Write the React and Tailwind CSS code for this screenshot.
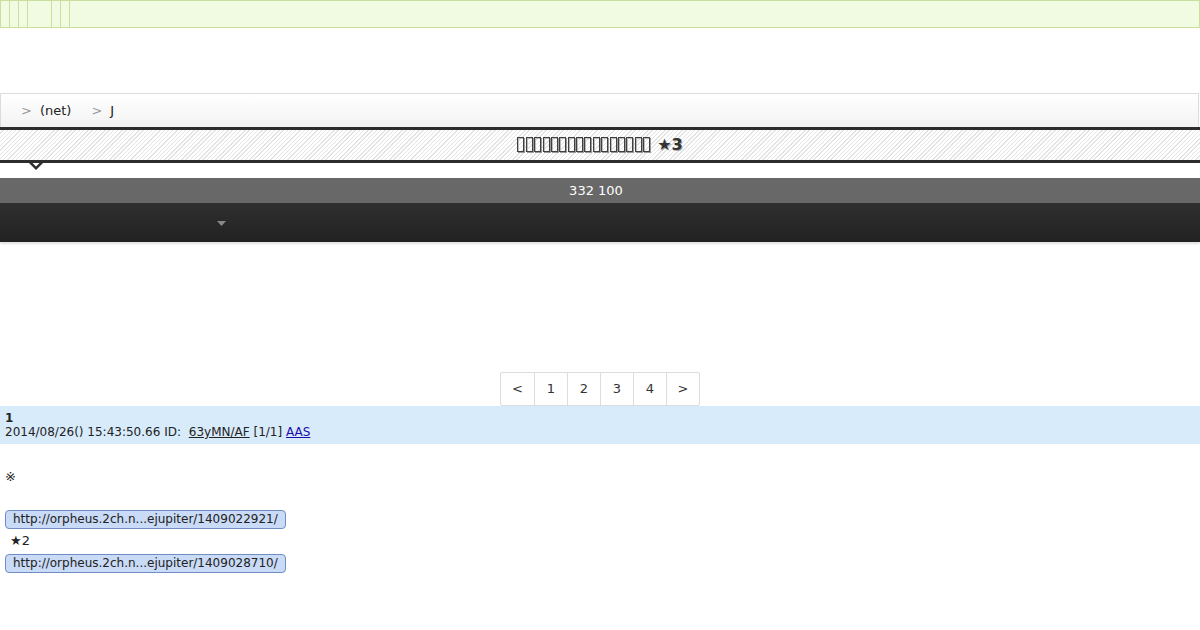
import React from "react";

const font = { fontFamily: '"DejaVu Sans", "Noto Sans CJK JP", sans-serif' };

function Tofu() {
  return (
    <span className="inline-block w-[7px] h-[15px] border-[1.5px] border-[#404040] shadow-[1px_1px_0_#999,inset_1px_1px_0_#bbb] mr-[1.4px] align-[-2px]" />
  );
}

export default function App() {
  const cols = [9, 9, 9, 24, 9, 9];
  return (
    <div className="w-[1200px] h-[630px] bg-white text-[13px] text-[#222] overflow-hidden" style={font}>
      {/* top ad bar */}
      <div className="h-[28px] border border-[#c9df9d] bg-[#f1fbe1] flex">
        {cols.map((w, i) => (
          <div key={i} className="h-full border-r border-[#c9df9d]" style={{ width: w }} />
        ))}
      </div>

      <div className="h-[65px]" />

      {/* breadcrumb */}
      <div className="h-[34px] border-t border-l border-r border-[#dcdcdc] bg-gradient-to-b from-white to-[#f3f3f3] flex items-center pl-[20px] mr-[1px]">
        <span className="text-[#999] mr-[8px]">&gt;</span>
        <span className="mr-[20px]">(net)</span>
        <span className="text-[#999] mr-[8px]">&gt;</span>
        <span>J</span>
      </div>

      {/* title */}
      <div className="relative">
        <div className="h-[36px] border-t-[3px] border-b-[3px] border-[#2d2d2d] bg-[repeating-linear-gradient(135deg,#ffffff_0px,#ffffff_2px,#e4e4e4_2px,#e4e4e4_3px)] flex items-center justify-center">
          <span className="font-bold text-[16px] text-[#333] [text-shadow:1px_1px_0_#aaa] whitespace-nowrap">
            {Array.from({ length: 16 }).map((_, i) => (
              <Tofu key={i} />
            ))}
            <span> ★3</span>
          </span>
        </div>
        <svg className="absolute left-[26px] top-[33px]" width="20" height="12" viewBox="0 0 20 12">
          <path d="M0 0 L10 10 L20 0 L16.5 0 L10 6.5 L3.5 0 Z" fill="#2d2d2d" />
        </svg>
      </div>

      <div className="h-[15px]" />

      {/* counter bar */}
      <div className="h-[25px] bg-[#686868] text-white flex items-center justify-center text-[13px] pr-[8px]">
        332 100
      </div>

      {/* dark menu bar */}
      <div className="h-[39px] bg-gradient-to-b from-[#2f2f2f] to-[#222] shadow-[0_2px_2px_rgba(0,0,0,0.12)] flex items-center">
        <svg className="ml-[217px] mt-[2px]" width="9" height="5" viewBox="0 0 9 5">
          <path d="M0 0 L9 0 L4.5 5 Z" fill="#888" />
        </svg>
      </div>

      <div className="h-[130px]" />

      {/* pagination */}
      <div className="flex justify-center">
        <div className="flex border border-[#ddd] rounded-[2px] h-[34px]">
          {["<", "1", "2", "3", "4", ">"].map((t, i) => (
            <div
              key={i}
              className={`flex items-center justify-center text-[#333] ${i === 0 ? "w-[33px]" : "w-[33px]"} ${i === 5 ? "w-[32px]" : ""} ${i > 0 ? "border-l border-[#ddd]" : ""}`}
            >
              {t}
            </div>
          ))}
        </div>
      </div>

      {/* post header */}
      <div className="h-[38px] bg-[#d8ebfa] px-[5px] pt-[5px] leading-[14px] text-[12px]">
        <div className="font-bold">1</div>
        <div>
          2014/08/26() 15:43:50.66 ID:{"  "}
          <span className="underline ml-[4px]">63yMN/AF</span> [1/1]{" "}
          <span className="underline text-[#1a0dab]">AAS</span>
        </div>
      </div>

      {/* body */}
      <div className="px-[5px] pt-[26px] leading-[14px] text-[12px]">
        <div className="text-[13px]">※</div>
        <div className="h-[26px]" />
        <div className="inline-block bg-[#c9dbf6] border border-[#6f8fc2] rounded-[4px] px-[7px] h-[19px] leading-[17px]">
          http://orpheus.2ch.n...ejupiter/1409022921/
        </div>
        <div className="pl-[5px] mt-[5px] mb-[6px] text-[13px]">★2</div>
        <div className="inline-block bg-[#c9dbf6] border border-[#6f8fc2] rounded-[4px] px-[7px] h-[19px] leading-[17px]">
          http://orpheus.2ch.n...ejupiter/1409028710/
        </div>
      </div>
    </div>
  );
}
